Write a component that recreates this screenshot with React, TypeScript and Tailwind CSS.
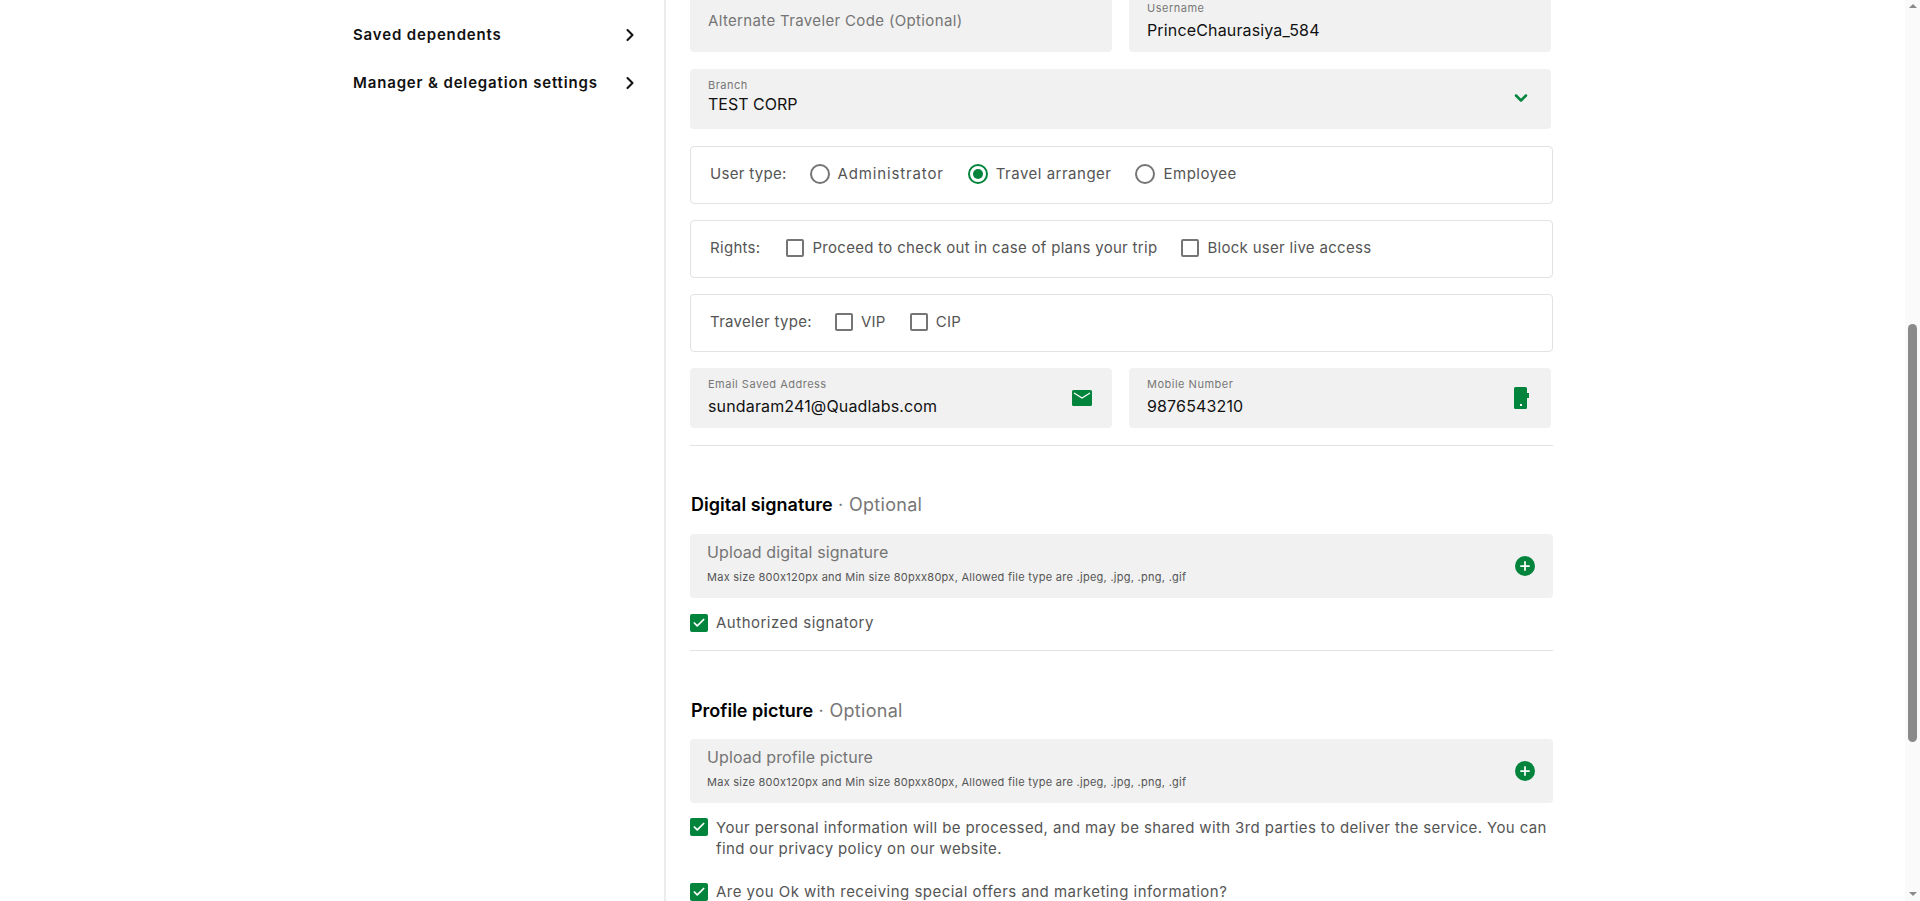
import React from 'react';
import { Check, ChevronDown, ChevronRight, Plus } from 'lucide-react';

const Radio = ({ checked = false }: { checked?: boolean }) => (
  <span className={`flex size-5 shrink-0 items-center justify-center rounded-full border-2 ${checked ? 'border-[#02843d]' : 'border-[#757575]'}`}>
    {checked && <span className="size-[10px] rounded-full bg-[#02843d]" />}
  </span>
);

const Box = () => <span className="size-[18px] shrink-0 rounded-[2px] border-2 border-[#757575]" />;

const CheckedBox = () => (
  <span className="flex size-[18px] shrink-0 items-center justify-center rounded-[2px] bg-[#02843d]">
    <Check className="size-[14px] text-white" strokeWidth={3} />
  </span>
);

const Field = ({ label, value, icon }: { label: string; value: string; icon?: React.ReactNode }) => (
  <div className="relative h-[60px] flex-1 rounded-[4px] bg-[#f1f1f1] pl-[18px] pt-[10px]">
    <div className="text-[11px] leading-[13px] tracking-[0.5px] text-[#777]">{label}</div>
    <div className="mt-[5px] text-base leading-5 tracking-[0.15px] text-[#111]">{value}</div>
    {icon}
  </div>
);

const OptionRow = ({ children }: { children: React.ReactNode }) => (
  <div className="flex h-[58px] w-[863px] items-center rounded-[4px] border border-[#e2e2e2] pl-[19px] pb-[2px] text-[15px] tracking-[0.3px] text-[#555]">
    {children}
  </div>
);

const Upload = ({ title }: { title: string }) => (
  <div className="flex h-16 w-[863px] items-center justify-between rounded-[4px] bg-[#f1f1f1] pl-[17px] pr-[18px]">
    <div className="self-start pt-2">
      <div className="text-base leading-5 tracking-[0.1px] text-[#757575]">{title}</div>
      <div className="mt-2 text-[11px] leading-[14px] tracking-[0.27px] text-[#555]">
        Max size 800x120px and Min size 80pxx80px, Allowed file type are .jpeg, .jpg, .png, .gif
      </div>
    </div>
    <span className="flex size-5 items-center justify-center rounded-full bg-[#02843d]">
      <Plus className="size-[14px] text-white" strokeWidth={3} />
    </span>
  </div>
);

const Heading = ({ title }: { title: string }) => (
  <div className="pl-px text-lg leading-6 tracking-[0.3px] text-[#777]">
    <span className="font-semibold tracking-normal text-black">{title}</span> · Optional
  </div>
);

export default function App() {
  return (
    <div className="flex h-[901px] overflow-hidden bg-white font-['Inter',sans-serif]">
      {/* Side menu */}
      <aside className="w-[666px] shrink-0 border-r-2 border-[#ececec] pl-[353px] pr-6 pt-[23px]">
        {['Saved dependents', 'Manager & delegation settings'].map((item) => (
          <div key={item} className="flex h-12 items-start justify-between text-[15px] font-semibold leading-6 tracking-[0.85px] text-[#111]">
            {item}
            <ChevronRight className="mt-[2px] size-5 text-[#111]" strokeWidth={2.5} />
          </div>
        ))}
      </aside>

      {/* Form, scrolled so that the first row is cut off */}
      <main className="-mt-2 flex-1 pl-6">
        <div className="flex w-[861px] gap-[17px]">
          <div className="h-[60px] flex-1 rounded-[4px] bg-[#f1f1f1] pl-[18px] pt-[19px] text-[15px] leading-5 tracking-[0.35px] text-[#757575]">
            Alternate Traveler Code (Optional)
          </div>
          <Field label="Username" value="PrinceChaurasiya_584" />
        </div>

        <div className="mt-[17px] flex h-[60px] w-[861px] items-start justify-between rounded-[4px] bg-[#f1f1f1] pl-[18px] pr-5 pt-[10px]">
          <div>
            <div className="text-[11px] leading-[13px] tracking-[0.5px] text-[#777]">Branch</div>
            <div className="mt-[2px] text-base leading-5 text-[#111]">TEST CORP</div>
          </div>
          <ChevronDown className="mt-[9px] size-5 text-[#02843d]" strokeWidth={3} />
        </div>

        <div className="mt-[17px] flex flex-col gap-4">
          <OptionRow>
            <span>User type:</span>
            <span className="ml-[23px] flex items-center gap-2 tracking-[0.85px]"><Radio />Administrator</span>
            <span className="ml-6 flex items-center gap-2 tracking-[0.5px]"><Radio checked />Travel arranger</span>
            <span className="ml-6 flex items-center gap-2 tracking-[0.5px]"><Radio />Employee</span>
          </OptionRow>
          <OptionRow>
            <span>Rights:</span>
            <span className="ml-[26px] flex items-center gap-2"><Box />Proceed to check out in case of plans your trip</span>
            <span className="ml-6 flex items-center gap-2"><Box />Block user live access</span>
          </OptionRow>
          <OptionRow>
            <span>Traveler type:</span>
            <span className="ml-[23px] flex items-center gap-2"><Box />VIP</span>
            <span className="ml-6 flex items-center gap-2"><Box />CIP</span>
          </OptionRow>
        </div>

        <div className="mt-4 flex w-[861px] gap-[17px]">
          <Field
            label="Email Saved Address"
            value="sundaram241@Quadlabs.com"
            icon={
              <svg viewBox="0 0 20 16" className="absolute right-5 top-[22px] h-4 w-5">
                <rect width="20" height="16" rx="1.5" fill="#02843d" />
                <path d="M2 3l8 5 8-5" fill="none" stroke="#fff" strokeWidth="1.3" />
              </svg>
            }
          />
          <Field
            label="Mobile Number"
            value="9876543210"
            icon={
              <svg viewBox="0 0 15 22" className="absolute right-[22px] top-[19px] h-[22px] w-[15px]">
                <path d="M1.5 0h10A1.5 1.5 0 0 1 13 1.5V6h2v5h-2v9.5a1.5 1.5 0 0 1-1.5 1.5h-10A1.5 1.5 0 0 1 0 20.5v-19A1.5 1.5 0 0 1 1.5 0z" fill="#02843d" />
                <rect x="6" y="17" width="2" height="2" fill="#fff" />
              </svg>
            }
          />
        </div>

        <hr className="mt-[17px] w-[863px] border-t border-[#e2e2e2]" />

        <div className="mt-[47px]"><Heading title="Digital signature" /></div>
        <div className="mt-[17px]"><Upload title="Upload digital signature" /></div>
        <div className="mt-[15px] flex items-center gap-2 text-[15px] leading-5 tracking-[0.5px] text-[#555]">
          <CheckedBox />Authorized signatory
        </div>
        <hr className="mt-[17px] w-[863px] border-t border-[#e2e2e2]" />

        <div className="mt-12"><Heading title="Profile picture" /></div>
        <div className="mt-4"><Upload title="Upload profile picture" /></div>
        <div className="mt-[14px] flex w-[863px] items-start gap-2 text-[15px] leading-[21px] tracking-[0.38px] text-[#555]">
          <span className="mt-[1px]"><CheckedBox /></span>
          <span>Your personal information will be processed, and may be shared with 3rd parties to deliver the service. You can find our privacy policy on our website.</span>
        </div>
        <div className="mt-6 flex items-center gap-2 text-[15px] leading-4 tracking-[0.47px] text-[#555]">
          <CheckedBox />Are you Ok with receiving special offers and marketing information?
        </div>
      </main>

      {/* Window scrollbar */}
      <div className="flex w-[15px] shrink-0 flex-col items-center bg-[#fafafa]">
        <span className="mt-[4px] h-0 w-0 border-x-[4px] border-b-[4px] border-x-transparent border-b-[#8a8a8a]" />
        <span className="mt-[316px] h-[418px] w-[9px] shrink-0 rounded-full bg-[#8a8a8a]" />
        <span className="mt-[150px] h-0 w-0 border-x-[4px] border-t-[4px] border-x-transparent border-t-[#8a8a8a]" />
      </div>
    </div>
  );
}
